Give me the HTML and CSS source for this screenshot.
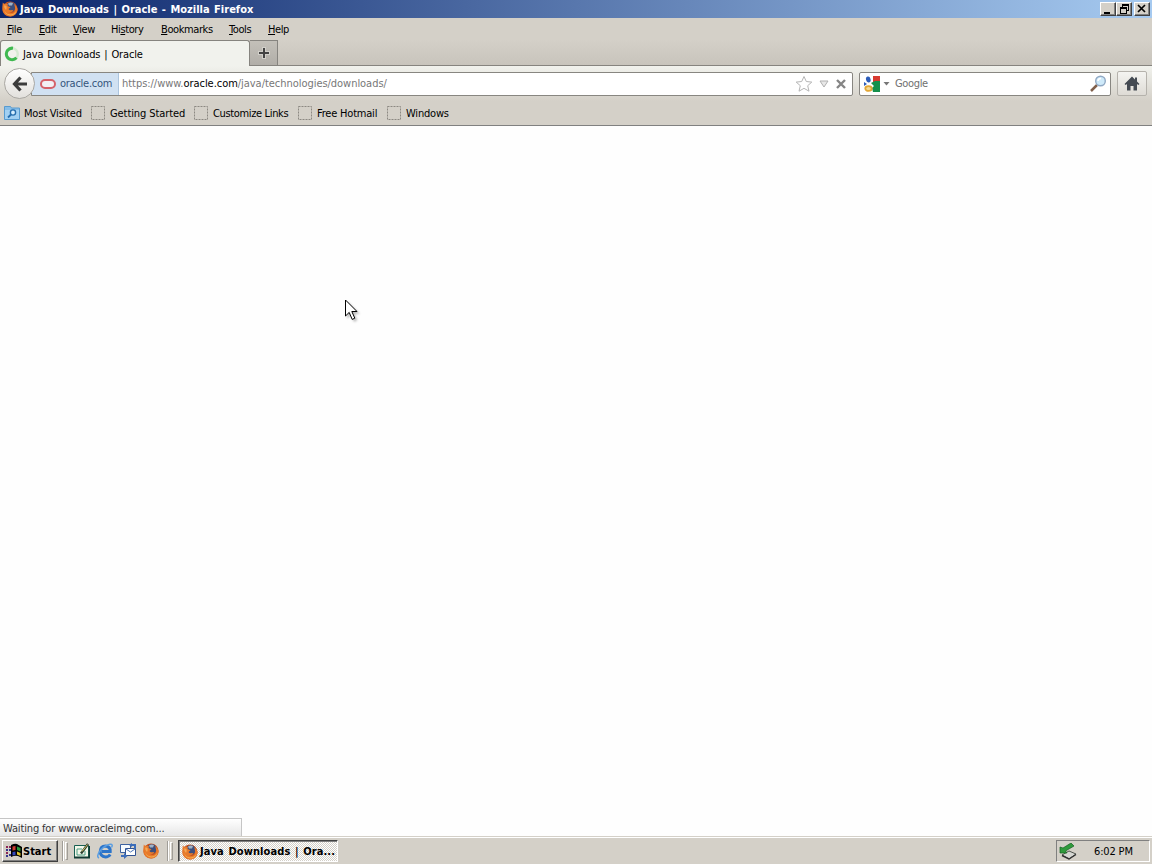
FILE: index.html
```html
<!DOCTYPE html>
<html lang="en">
<head>
    <meta charset="UTF-8">
    <title>Java Downloads | Oracle - Mozilla Firefox</title>
    <link rel="stylesheet" href="styles.css">
</head>
<body>

<svg class="defs" width="0" height="0">
    <symbol id="firefox" viewBox="0 0 16 16">
        <circle cx="8" cy="8" r="7.600" fill="#c9531d"/>
        <circle cx="8.800" cy="6" r="4.800" fill="#3c4e7c"/>
        <path d="M6 2.500Q8.500 .8 11 2L10 4.500L7 4.500Z" fill="#9fb3c8"/>
        <path d="M.8 1.500Q2 3 3.300 3Q5 2.500 6 3.500L5.500 5L8.500 6.300L6.500 8Q7.500 10 10 9L11.500 9.500Q9.500 12 6.500 11Q10 13.300 12.500 10.500Q14 7.500 12 3Q16 6 15.500 9.500Q14 15 8.500 15.500Q2 15 .7 10Q0 6 .8 1.500Z" fill="#e8792a"/>
        <path d="M2 8Q3 12.500 7 13.300Q12 14 14.500 9.500Q13.500 14.500 8 14.500Q2.500 13.500 2 8Z" fill="#f4ae52"/>
        <path d="M2 4.500Q4 4 4.500 5.500Q5 7 4 9Q2 7.500 2 4.500Z" fill="#f3a856"/>
    </symbol>
    <symbol id="blank" viewBox="0 0 16 16">
        <path d="M1.500 1.500h13v13h-13z" fill="none" stroke="#8c8982" stroke-dasharray="2 1"/>
    </symbol>
</svg>

<div class="window">
    <div class="titlebar">
        <svg class="icon"><use href="#firefox"/></svg>
        <span class="title">Java Downloads | Oracle - Mozilla Firefox</span>
        <div class="controls">
            <span class="control"><svg width="14" height="12"><path d="M3 9h6v2H3z"/></svg></span>
            <span class="control"><svg width="14" height="12"><path d="M5 1h7v7h-2v3H3V4h2zM6 3v1h4v3h1V3zM4 6v4h5V6z" fill-rule="evenodd"/></svg></span>
            <span class="control close"><svg width="14" height="12"><path d="M3 2l7 7M10 2l-7 7" stroke="#000" stroke-width="1.700"/></svg></span>
        </div>
    </div>

    <div class="menubar">
        <span><u>F</u>ile</span>
        <span><u>E</u>dit</span>
        <span><u>V</u>iew</span>
        <span>Hi<u>s</u>tory</span>
        <span><u>B</u>ookmarks</span>
        <span><u>T</u>ools</span>
        <span><u>H</u>elp</span>
    </div>

    <div class="tabs">
        <div class="tab">
            <svg class="icon" viewBox="0 0 16 16"><circle cx="8" cy="8" r="5.800" fill="none" stroke="#d5ead2" stroke-width="2.400"/><path d="M9 2.200A5.800 5.800 0 1 0 12.500 11.800" fill="none" stroke="#3fb950" stroke-width="3"/></svg>
            <span>Java Downloads | Oracle</span>
        </div>
        <div class="new-tab"><svg width="12" height="12"><path d="M4 0h4v4h4v4H8v4H4V8H0V4h4z" fill="#d2d0ca"/><path d="M5 1h2v4h4v2H7v4H5V7H1V5h4z" fill="#444"/></svg></div>
    </div>

    <div class="navbar">
        <div class="back"><svg width="18" height="18" viewBox="0 0 18 18"><path d="M9.500 2.500L3.500 9l6 6.500M4 9h12" fill="none" stroke="#3c3c3c" stroke-width="3.200"/></svg></div>
        <div class="urlbar">
            <div class="identity">
                <svg width="16" height="12"><rect x="1" y="2" width="14" height="8" rx="4" fill="#f2f0f4" stroke="#d5626a" stroke-width="2"/></svg>
                <span>oracle.com</span>
            </div>
            <span class="url">https://www.<b>oracle.com</b>/java/technologies/downloads/</span>
            <div class="url-icons">
                <svg width="18" height="18" viewBox="0 0 18 18"><path d="M9 1.500l2.300 5 5.500.6-4.100 3.600 1.300 5.500L9 13.300l-5 2.900 1.300-5.500L1.200 7.100l5.500-.6z" fill="#fff" stroke="#b5b5b5"/></svg>
                <svg width="10" height="8"><path d="M1 1h8L5 7z" fill="#e8e8e8" stroke="#b0b0b0"/></svg>
                <svg width="12" height="12"><path d="M2 2l8 8M10 2l-8 8" stroke="#858585" stroke-width="2.400"/></svg>
            </div>
        </div>
        <div class="search">
            <svg width="16" height="16" viewBox="0 0 16 16"><path d="M9 0h7v6H9z" fill="#d83a30"/><path d="M7 7l4-2h5v11H9l-1-4 2-2z" fill="#15904c"/><ellipse cx="4.300" cy="3.500" rx="2.300" ry="3" fill="#2c5dba" transform="rotate(-15 4.300 3.500)"/><path d="M0 6l3 2-3 2z" fill="#2c5dba"/><ellipse cx="4.500" cy="12.500" rx="3.200" ry="2.400" fill="#f6dc96" stroke="#e3a736" stroke-width="1.800"/></svg>
            <svg class="caret" width="7" height="4"><path d="M.5 0h6L3.500 3.500z" fill="#777"/></svg>
            <span>Google</span>
            <svg class="magnifier" width="17" height="17" viewBox="0 0 17 17"><path d="M1 16l6-6" stroke="#80604c" stroke-width="2.500"/><circle cx="10.500" cy="6" r="4.800" fill="#cfeafa" stroke="#91a9c4" stroke-width="1.400"/><path d="M8 6Q8 3.500 11 3.500" fill="none" stroke="#fff" stroke-width="1.500"/></svg>
        </div>
        <div class="home"><svg width="16" height="15" viewBox="0 0 16 15"><path d="M8 .5L.5 8l1.200 1L3 8v6.500h3.500V10h3v4.500H13V8l1.300 1 1.200-1L13 5.500v-4h-2v2z" fill="#444a52"/></svg></div>
    </div>

    <div class="bookmarks">
        <span class="bookmark"><svg class="icon" viewBox="0 0 16 16"><path d="M.5 1.500h6l1 1.500h8v11.500H.5z" fill="#86bde8" stroke="#589bcf"/><path d="M1 5h14v9H1z" fill="#a2d0f2"/><circle cx="9" cy="7.500" r="2.600" fill="#d7efff" stroke="#276eae" stroke-width="1.400"/><path d="M7 9.500L4 12.500" stroke="#276eae" stroke-width="1.800"/></svg><span>Most Visited</span></span>
        <span class="bookmark"><svg class="icon"><use href="#blank"/></svg><span class="wide">Getting Started</span></span>
        <span class="bookmark"><svg class="icon"><use href="#blank"/></svg><span class="tight">Customize Links</span></span>
        <span class="bookmark"><svg class="icon"><use href="#blank"/></svg><span>Free Hotmail</span></span>
        <span class="bookmark"><svg class="icon"><use href="#blank"/></svg><span>Windows</span></span>
    </div>

    <div class="content">
        <div class="status">Waiting for www.oracleimg.com...</div>
    </div>
</div>

<div class="taskbar">
    <div class="start">
        <svg width="17" height="16" viewBox="0 0 17 16"><path d="M0 3h2v2H0zM3 3h2v2H3zM0 9h2v2H0z" fill="#8c2855"/><path d="M0 6h2v2H0zM3 6h2v2H3zM0 12h2v2H0zM3 11h2v2H3z" fill="#35358c"/><path d="M5 2Q9 0 11 1l5 3v11l-4-2q-3-1-7 1z"/><path d="M6.500 3.500L9.500 3v4L6.500 7.500z" fill="#ce3b31"/><path d="M11 3.500L14.500 5v3.500L11 7z" fill="#269a3c"/><path d="M6.500 9L9.500 8.500v3.500l-3 .5z" fill="#3447bd"/><path d="M11 8.500l3.500 1.500v3L11 11.500z" fill="#e3c52e"/></svg>
        <span>Start</span>
    </div>
    <i class="divider"></i><i class="grip"></i>
    <div class="quick-launch">
        <svg class="icon" viewBox="0 0 16 16"><path d="M.5 2.500h14v12H.5z" fill="#f3f8ea" stroke="#176052"/><path d="M0 14.500h15.500V3" fill="none" stroke="#123c34" stroke-width="1.800"/><path d="M3 6h5M3 6v6h8V8" fill="none" stroke="#4d9c83"/><path d="M7 10.500L14 1" stroke="#283e31" stroke-width="2.400"/><path d="M8 8.500l5.500-7" stroke="#dbc464"/></svg>
        <svg class="icon" viewBox="0 0 16 16"><path d="M13.200 11.500Q11.500 14 8.500 14Q3.200 13.500 3.200 8.500Q3.500 3 8.500 3Q13.500 3.500 13.200 8.500H5" fill="none" stroke="#2b74ca" stroke-width="3"/><path d="M2 15Q-1 13.500 3 8Q8 2 13 1.300Q16.500 1 14.500 4.500" fill="none" stroke="#5a9ee2" stroke-width="1.500"/></svg>
        <svg class="icon" viewBox="0 0 16 16"><path d="M.5 1.500h10v8H.5z" fill="#f6fafd" stroke="#3d62a0"/><path d="M5.500 5.500h10v7h-10z" fill="#fff" stroke="#315392"/><path d="M6 6l4.500 3L15 6" fill="none" stroke="#4874b8"/><path d="M1 8v4h3v-2l3.500 3L4 16v-2H1z" fill="#3f6fbb"/><path d="M9 2l3-2v1h4v5h-2V3h-2v1z" fill="#3a6cba"/></svg>
        <svg class="icon"><use href="#firefox"/></svg>
    </div>
    <i class="divider"></i><i class="grip"></i>
    <div class="task">
        <svg class="icon"><use href="#firefox"/></svg>
        <span>Java Downloads | Ora...</span>
    </div>
    <div class="tray">
        <svg width="18" height="17" viewBox="0 0 18 17"><path d="M3 12l7-4 7 3-7 5z" fill="#d5d6d2" stroke="#50554f"/><path d="M3 12.500l7 3.500 7-4.500" fill="none" stroke="#333" stroke-width="1.400"/><path d="M1 4v6h7L6.500 8 15 3l-3-3-8 5z" fill="#2f9b3c" stroke="#15601f" stroke-width=".7"/></svg>
        <span>6:02 PM</span>
    </div>
</div>

<svg class="cursor" width="14" height="22" viewBox="0 0 14 22"><path d="M.5 1v16l3.700-3.600 3 7 2.600-1.200-3-6.700h5.200z" fill="#fff" stroke="#000"/></svg>

</body>
</html>
```
FILE: styles.css
```css
* {
    box-sizing: border-box;
}
body {
    margin: 0;
    height: 864px;
    overflow: hidden;
    display: flex;
    flex-direction: column;
    font: 11px/14px Tahoma, "DejaVu Sans Condensed", "DejaVu Sans", sans-serif;
    font-stretch: condensed;
    letter-spacing: -0.35px;
    color: #000;
    background: #d4d0c8;
    white-space: nowrap;
}
svg {
    display: block;
    flex: none;
}
.defs {
    position: absolute;
}
.icon {
    width: 16px;
    height: 16px;
}
.window {
    flex: 1;
    display: flex;
    flex-direction: column;
}
.titlebar {
    height: 18px;
    display: flex;
    align-items: center;
    padding: 0 2px;
    gap: 2px;
    color: #fff;
    font-weight: bold;
    background: linear-gradient(to right, #0a246a, #a6caf0);
}
.title {
    padding-top: 1px;
    letter-spacing: 0;
    word-spacing: 1px;
}
.controls {
    display: flex;
    margin-left: auto;
}
.control {
    width: 16px;
    height: 14px;
    background: #d4d0c8;
    border: 1px solid;
    border-color: #fff #404040 #404040 #fff;
    box-shadow: inset -1px -1px #808080;
}
.close {
    margin-left: 2px;
}
.menubar {
    height: 22px;
    display: grid;
    grid-template-columns: 32px 34px 38px 50px 68px 39px 40px;
    align-items: center;
    padding: 2px 0 0 7px;
    letter-spacing: -0.4px;
}
.tabs {
    height: 26px;
    display: flex;
    align-items: flex-end;
    border-bottom: 1px solid #86847f;
    background: linear-gradient(#d4d0c8, #c8c4bc);
}
.tab {
    width: 250px;
    height: 26px;
    margin-bottom: -1px;
    display: flex;
    align-items: center;
    gap: 3px;
    padding-left: 3px;
    border: 1px solid #86847f;
    border-width: 1px 1px 0;
    border-radius: 3px 3px 0 0;
    background: #f1f2ed;
    letter-spacing: -0.15px;
    word-spacing: 1px;
}
.tab span {
    padding-top: 2px;
}
.new-tab {
    width: 28px;
    height: 25px;
    display: flex;
    align-items: center;
    justify-content: center;
    border: 1px solid #86847f;
    border-width: 1px 1px 0 0;
    background: linear-gradient(#c3c0b9, #b1aea8);
}
.navbar {
    height: 35px;
    display: flex;
    align-items: center;
    padding-left: 4px;
    background: linear-gradient(#f1f2ed, #d4d0c8);
}
.back {
    width: 31px;
    height: 31px;
    display: flex;
    align-items: center;
    justify-content: center;
    border: 1px solid #aaa8a3;
    border-radius: 50%;
    background: linear-gradient(#fff, #e2e0dc);
    z-index: 1;
}
.urlbar {
    width: 822px;
    height: 24px;
    margin-left: -4px;
    display: flex;
    align-items: center;
    border: 1px solid #888681;
    border-radius: 0 2px 2px 0;
    background: #fff;
}
.identity {
    width: 87px;
    height: 22px;
    display: flex;
    align-items: center;
    gap: 4px;
    padding-left: 8px;
    color: #34547c;
    border-right: 1px solid #acc5df;
    background: #d1e1f2;
    letter-spacing: -0.25px;
}
.identity span, .url, .search span {
    padding-top: 1px;
}
.url {
    margin-left: 3px;
    color: #777;
    letter-spacing: -0.04px;
}
.url b {
    color: #000;
    font-weight: normal;
}
.url-icons {
    display: flex;
    align-items: center;
    gap: 6px;
    margin-left: auto;
    padding-right: 5px;
}
.search {
    width: 252px;
    height: 24px;
    margin-left: 6px;
    display: flex;
    align-items: center;
    padding: 0 3px 0 4px;
    color: #707070;
    border: 1px solid #888681;
    border-radius: 2px;
    background: #fff;
}
.caret {
    margin: 0 5px 0 3px;
}
.magnifier {
    margin-left: auto;
}
.home {
    width: 30px;
    height: 25px;
    margin-left: 6px;
    display: flex;
    align-items: center;
    justify-content: center;
    border: 1px solid #b5b2ac;
    border-radius: 2px;
    background: linear-gradient(#f4f4f1, #dedbd5);
}
.bookmarks {
    height: 25px;
    display: grid;
    grid-template-columns: 86px 103px 104px 89px 80px;
    align-items: center;
    padding-left: 4px;
    border-bottom: 1px solid #808080;
    letter-spacing: -0.2px;
}
.bookmark {
    display: flex;
    align-items: center;
    gap: 4px;
}
.bookmark span {
    padding-top: 2px;
}
.wide {
    letter-spacing: -0.08px;
}
.tight {
    letter-spacing: -0.35px;
}
.content {
    flex: 1;
    display: flex;
    align-items: flex-end;
    background: #fefefe;
}
.status {
    width: 242px;
    height: 18px;
    padding: 3px 3px 0;
    color: #333;
    border: 1px solid #c5c5c5;
    border-width: 1px 1px 0 0;
    background: linear-gradient(#fff, #e6e6e6);
    letter-spacing: -0.15px;
}
.taskbar {
    height: 28px;
    display: flex;
    align-items: center;
    padding: 1px 2px 0;
    border-top: 1px solid #d4d0c8;
    box-shadow: inset 0 1px #fff;
}
.start {
    width: 56px;
    height: 22px;
    display: flex;
    align-items: center;
    padding-left: 3px;
    font-weight: bold;
    letter-spacing: 0;
    border: 1px solid;
    border-color: #fff #404040 #404040 #fff;
    box-shadow: inset -1px -1px #808080;
}
.divider {
    width: 2px;
    height: 20px;
    margin-left: 4px;
    border-left: 1px solid #a09d97;
    border-right: 1px solid #fff;
}
.grip {
    width: 3px;
    height: 18px;
    margin-left: 1px;
    border: 1px solid;
    border-color: #fff #a09d97 #a09d97 #fff;
}
.quick-launch {
    display: flex;
    gap: 7px;
    margin-left: 6px;
    margin-right: 4px;
}
.task {
    width: 160px;
    height: 22px;
    margin-left: 5px;
    display: flex;
    align-items: center;
    gap: 2px;
    padding: 1px 0 0 3px;
    font-weight: bold;
    letter-spacing: 0.1px;
    word-spacing: 1px;
    border: 1px solid;
    border-color: #404040 #fff #fff #404040;
    box-shadow: inset 1px 1px #808080;
    background: repeating-conic-gradient(#fff 0 25%, #d4d0c8 0 50%) 0 0 / 2px 2px;
}
.task span, .start span, .tray span {
    padding-top: 1px;
}
.tray {
    width: 94px;
    height: 22px;
    margin-left: auto;
    display: flex;
    align-items: center;
    gap: 17px;
    padding-left: 2px;
    letter-spacing: -0.15px;
    border: 1px solid;
    border-color: #808080 #fff #fff #808080;
}
.cursor {
    position: absolute;
    left: 345px;
    top: 299px;
    filter: drop-shadow(2px 2px 1px rgba(0,0,0,.25));
}
```
